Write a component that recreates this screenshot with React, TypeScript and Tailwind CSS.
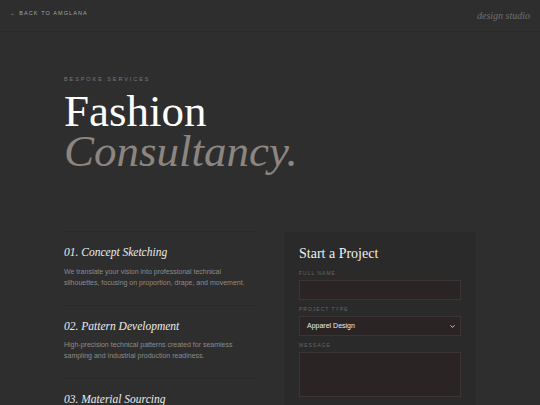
import { ChevronDown } from 'lucide-react';

const serif = "font-['Liberation_Serif',Georgia,serif]";
const sans = "font-['Liberation_Sans',Arial,sans-serif]";

const services = [
  {
    title: '01. Concept Sketching',
    text: 'We translate your vision into professional technical silhouettes, focusing on proportion, drape, and movement.',
  },
  {
    title: '02. Pattern Development',
    text: 'High-precision technical patterns created for seamless sampling and industrial production readiness.',
  },
  {
    title: '03. Material Sourcing',
    text: 'Access to a curated network of mills and suppliers for premium fabrics and trims.',
  },
];

function Label({ children }: { children: string }) {
  return (
    <div className={`${sans} text-[5px] leading-[6px] uppercase tracking-[0.2em] text-[#6b6563] mb-[4px]`}>
      {children}
    </div>
  );
}

export default function App() {
  return (
    <div className={`w-[540px] h-[405px] overflow-hidden bg-[#2e2e2e] ${sans}`}>
      <header className="h-[32px] flex items-center justify-between px-[10px] border-b border-[#2a2a2a]">
        <a className="text-[5.5px] uppercase tracking-[0.2em] text-[#a3a3a3] -mt-[5px]">← Back to Amglana</a>
        <span className={`${serif} italic text-[10px] text-[#6e6e6e]`}>design studio</span>
      </header>

      <div className="px-16">
        <section className="pt-[43px]">
          <div className="text-[5.5px] uppercase tracking-[0.35em] text-[#7a7a7a]">Bespoke Services</div>
          <h1 className={`${serif} mt-[8px] text-[45px] leading-[40px] text-white`}>
            Fashion
            <br />
            <span className="italic text-[#8c8580]">Consultancy.</span>
          </h1>
        </section>

        <div className="grid grid-cols-2 gap-7 mt-[60px]">
          <div>
            {services.map((s) => (
              <div key={s.title} className="border-t border-[#2a2a2a] pt-[12px] pb-[17px]">
                <h3 className={`${serif} italic text-[11.5px] text-[#ececec]`}>{s.title}</h3>
                <p className="mt-[4px] text-[7px] leading-[11px] text-[#8c8c8c]">{s.text}</p>
              </div>
            ))}
          </div>

          <div className="bg-[#2a2a2a] border border-[#2c2c2c] px-[14px] pt-[11px] pb-[14px] h-[200px]">
            <h2 className={`${serif} text-[14px] text-[#f0f0f0]`}>Start a Project</h2>
            <div className="mt-[6px]">
              <Label>Full Name</Label>
              <div className="h-[20px] bg-[#2a2424] border border-[#3a3434]" />
            </div>
            <div className="mt-[6px]">
              <Label>Project Type</Label>
              <div className="h-[20px] bg-[#2a2424] border border-[#3a3434] flex items-center justify-between px-[7px]">
                <span className="text-[7px] text-[#eeeeee]">Apparel Design</span>
                <ChevronDown className="w-[7px] h-[7px] text-[#dddddd] -mr-[3px]" strokeWidth={3} />
              </div>
            </div>
            <div className="mt-[6px]">
              <Label>Message</Label>
              <div className="h-[45px] bg-[#2a2424] border border-[#3a3434]" />
            </div>
          </div>
        </div>
      </div>
    </div>
  );
}
